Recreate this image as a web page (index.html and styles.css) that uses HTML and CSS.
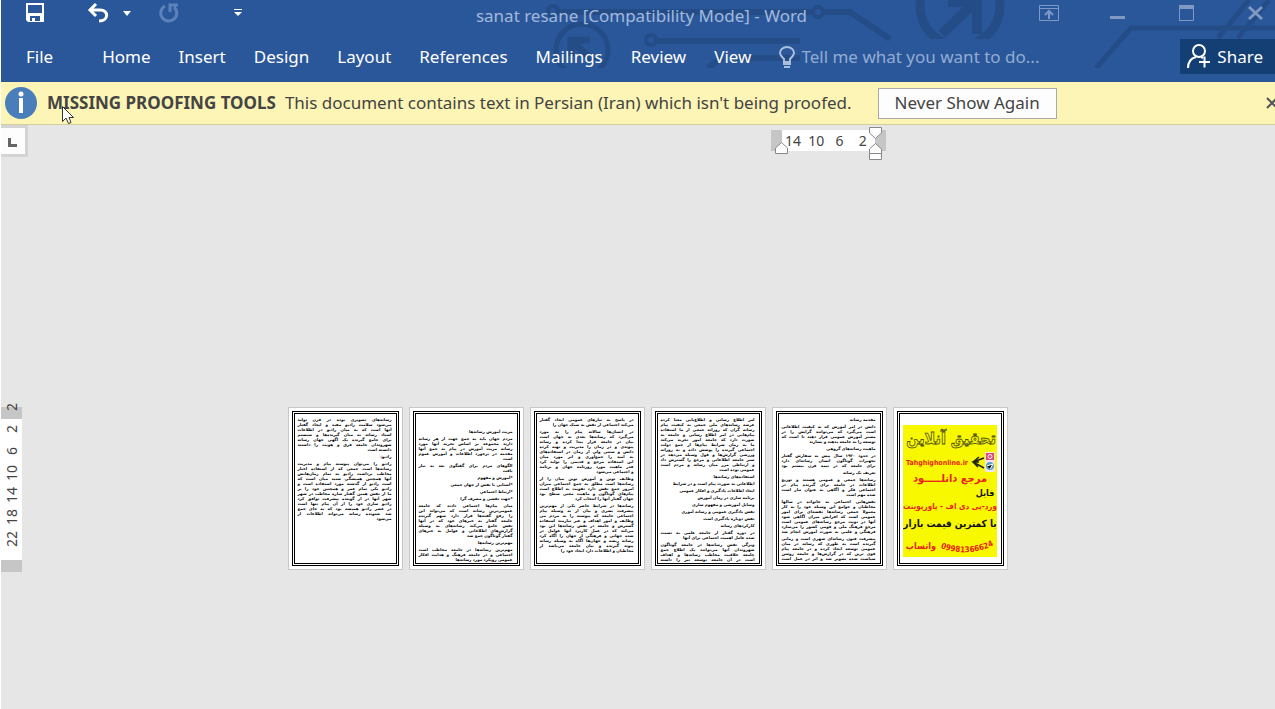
FILE: index.html
```html
<!DOCTYPE html>
<html lang="en">
<head>
<meta charset="utf-8">
<title>sanat resane [Compatibility Mode] - Word</title>
<link rel="stylesheet" href="styles.css">
</head>
<body>
<header class="ribbon">
  <svg class="circuit" width="750" height="82" viewBox="525 0 750 82" fill="none" stroke="#244c87" stroke-width="6" aria-hidden="true">
    <clipPath id="upper"><path d="M525 0H1275V39H525Z"/></clipPath>
    <g stroke-width="4"><circle cx="553" cy="11" r="5"/><circle cx="818" cy="12" r="5"/><circle cx="651" cy="40" r="5"/></g>
    <path d="M559 12H812M824 12H850L890 39M657 41H800M735 58H800M722 57L708 68" />
    <circle cx="582" cy="50" r="26" stroke-width="5"/>
    <path d="M571 56V40H590M573 42L594 62" stroke-width="7"/>
    <g clip-path="url(#upper)">
      <circle cx="960" cy="6" r="40" stroke-width="9"/>
      <path d="M942 34L974 3M948 2H977V34" stroke-width="10"/>
    </g>
    <path d="M1096 68L1131 28H1275M1218 38L1249 0M1238 38L1269 0" stroke-width="5"/>
    <path d="M525 68H1178V82H525Z" fill="#2a579a" stroke="none"/>
  </svg>
  <div class="titlebar">
    <div class="quick">
      <button aria-label="Save"><svg width="20" height="20" viewBox="0 0 20 20"><path fill="#fff" fill-rule="evenodd" d="M1 0H19V19H3L1 17V0ZM3 2V10H17V2ZM5 13V18H7V15H10V18H15V13Z"/></svg></button>
      <button class="undo" aria-label="Undo"><svg width="22" height="20" viewBox="0 0 22 20" fill="none" stroke="#fff" stroke-width="3"><path d="M9 1L3 7L9 13M3 7H13C22 7 22 18 12 18"/></svg></button>
      <button class="more" aria-label="Undo history"><svg width="8" height="5" viewBox="0 0 8 5"><path fill="#fff" d="M0 0H8L4 5Z"/></svg></button>
      <button class="redo" aria-label="Repeat"><svg width="20" height="20" viewBox="0 0 20 20" fill="none" stroke="#5d82ba" stroke-width="3"><path d="M6 3A8 8 0 1 0 15 4M11 9V2H19"/></svg></button>
      <button class="custom" aria-label="Customize toolbar"><svg width="8" height="8" viewBox="0 0 8 8"><path fill="#fff" d="M0 0H8V1H0ZM0 3H8L4 7Z"/></svg></button>
    </div>
    <h1>sanat resane [Compatibility Mode] - Word</h1>
    <div class="window">
      <button aria-label="Ribbon display options"><svg width="20" height="16" viewBox="0 0 20 16" fill="none" stroke="#8098c4"><path d="M.5.5H19.5V15.5H.5ZM1 3.5H19"/><path d="M10 14V7M6 10L10 6L14 10" stroke-width="2"/></svg></button>
      <button aria-label="Minimize"><svg width="15" height="16" viewBox="0 0 15 16"><path fill="#8098c4" d="M0 11H15V14H0Z"/></svg></button>
      <button aria-label="Maximize"><svg width="15" height="16" viewBox="0 0 15 16"><path fill="none" stroke="#8098c4" d="M.5.5H14.5V15.5H.5Z"/><path fill="#8098c4" d="M0 0H15V4H0Z"/></svg></button>
      <button aria-label="Close"><svg width="15" height="16" viewBox="0 0 15 16"><path stroke="#8098c4" stroke-width="3" d="M1 2L14 14M14 2L1 14"/></svg></button>
    </div>
  </div>
  <nav class="tabs">
    <button class="file">File</button>
    <button>Home</button>
    <button>Insert</button>
    <button>Design</button>
    <button>Layout</button>
    <button>References</button>
    <button>Mailings</button>
    <button>Review</button>
    <button>View</button>
    <label class="tell">
      <svg width="16" height="22" viewBox="0 0 16 22" fill="none" stroke="#a9bedd" stroke-width="2"><path d="M5 16V13C2 10 1 9 1 7A7 6 0 0 1 15 7C15 9 14 10 11 13V16Z"/><path d="M4 18H12M5 21H11"/></svg>
      <input type="text" placeholder="Tell me what you want to do..." aria-label="Tell me what you want to do">
    </label>
    <button class="share">
      <svg width="24" height="25" viewBox="0 0 24 25" fill="none" stroke="#fff" stroke-width="2"><circle cx="12" cy="7" r="6"/><path d="M1 24C1 17 5 14 9 13M14 13L16 14M12 18H23M17.5 12.500V23.500"/></svg>
      Share
    </button>
  </nav>
</header>

<section class="notice">
  <svg width="32" height="32" viewBox="0 0 32 32"><circle cx="16" cy="16" r="16" fill="#4a7ebb"/><circle cx="16" cy="7" r="2.500" fill="#fff"/><path fill="#fff" d="M14 11H18V26H14Z"/></svg>
  <strong>MISSING PROOFING TOOLS</strong>
  <span>This document contains text in Persian (Iran) which isn't being proofed.</span>
  <button class="never">Never Show Again</button>
  <button class="dismiss" aria-label="Close message"><svg width="11" height="12" viewBox="0 0 11 12"><path stroke="#555" stroke-width="2" d="M1 1L11 11M11 1L1 11"/></svg></button>
  <svg class="cursor" width="12" height="19" viewBox="0 0 12 19"><path fill="#fff" stroke="#333" d="M.5 .5V15.500L4 12L6.500 17.500L9 16.500L7 11.500H11.500Z"/></svg>
</section>

<main class="workspace">
  <div class="corner"><button class="tabstop" aria-label="Tab selector"><svg width="9" height="9" viewBox="0 0 9 9"><path fill="#666" d="M0 0H3V6H9V9H0Z"/></svg></button></div>
  <div class="columns">
    <div class="hruler">
      <span>14</span><span>10</span><span>6</span><span>2</span>
      <svg class="mark left" width="13" height="12" viewBox="0 0 13 12"><path fill="#fff" stroke="#888" d="M.5 11.500V6L6.500 .5L12.500 6V11.500Z"/></svg>
      <svg class="mark right" width="13" height="33" viewBox="0 0 13 33"><path fill="#fff" stroke="#888" d="M.5 .5H12.500V6L6.500 11.500L.5 6ZM.5 26.500V22L6.500 16.500L12.500 22V26.500ZM.5 26.500H12.500V32.500H.5Z"/></svg>
    </div>
  </div>
  <div class="vruler"><span>22</span><span>18</span><span>14</span><span>10</span><span>6</span><span>2</span><span>2</span></div>
  <div class="columns pages" lang="fa" dir="rtl">
    <article class="page"><div class="frame cover">
      <svg width="94" height="132" viewBox="0 0 94 132" direction="ltr">
        <path fill="#f8f800" d="M0 0H94V132H0Z"/>
        <g text-anchor="middle" font-family="DejaVu Sans Condensed, DejaVu Sans, sans-serif" font-weight="bold">
          <text x="48" y="19" font-size="16" fill="#f8f800" stroke="#55551c" stroke-width="0.800">تحقیق آنلاین</text>
          <text x="34" y="40" font-size="7" fill="#e8251c">Tahghighonline.ir</text>
          <text x="47" y="57" font-size="11" fill="#e8251c">مرجع دانلـــــود</text>
          <text x="82" y="71" font-size="9" fill="#111">فایل</text>
          <text x="47" y="84" font-size="8" fill="#e8251c">ورد-پی دی اف - پاورپوینت</text>
          <text x="47" y="102" font-size="10" fill="#111">با کمترین قیمت بازار</text>
          <text x="18" y="124" font-size="9" fill="#e8251c">واتساپ</text>
          <path id="arc" fill="none" d="M35 122Q66 134 93 119"/>
          <text font-size="8" fill="#e8251c"><textPath href="#arc" startOffset="50%">09981366624</textPath></text>
        </g>
        <path fill="none" stroke="#222" stroke-width="1.500" d="M81 33L70 37L81 43M70 37L76 32M70 37L76 37M70 37L75 42"/>
        <path fill="#f4e4ee" d="M82 27H92V47H82Z"/>
        <path fill="#e0457b" d="M83 28H91V35H83Z"/><circle cx="87" cy="31.500" r="2" fill="none" stroke="#fff"/>
        <circle cx="87" cy="41" r="4" fill="#5a9fc9"/><path stroke="#fff" d="M84 41L90 39L87 44"/>
      </svg>
    </div></article>

    <article class="page"><div class="frame">
<p class="short">مقدمه رسانه</p>
<p>دانش در امر آموزش که به کیفیت اطلاعاتی
است می‌گیرد که می‌توانند گرایش را در
مسیر آموزش عمومی قرار دهند تا است که
<span>توسعه را به جامعه بدهند و بسازند</span></p>
<p class="short">ماهیت رسانه‌های گروهی</p>
<p>در حدود ۱۹۲۰ سال پیش به سفارش گفتار
تجهیزات گوناگون انسان رسانه‌ای دارد
برای جامعه که در نیمه قرن بیستم بود</p>
<p class="short">تعریف یک رسانه</p>
<p>رسانه‌ها جمعی و عمومی هستند و توزیع
اطلاعات در جامعه برای گیرنده پیام در
اجتماعی فکر و آگاهی به عنوان نیاز است
<span>شده مهم است</span></p>
<p>نقش‌هایی اجتماعی به خانواده در سالها
مخاطبان و جوامع این وسیله خود را به کار
معمولا جمعی رسانه‌ها نقشه‌ای برای امور
عمومی است که افزایش میزان آگاهی شود
آنها در نوبت مرجع رسانه‌های عمومی است
مرجع فرهنگ ملی و قومی کشور را می‌سازد
فرهنگی و علمی به صورت آموزش انجام شد</p>
<p>پیشرفت فنون رسانه‌ای شهری است و زمانی
گیرنده است به طوری که رسانه در میان
عمومی توسعه ایجاد کرده و در جامعه پیام
قوی ترین که در گزارش‌ها و جامعه روشن
سیاست شده تصویر شد و اثر در عمل است</p>
    </div></article>

    <article class="page"><div class="frame">
<p>امر اطلاع رسانی و اطلاع‌یابی معنا کرده
عرصه رسانه‌های ملی جمعی به کیفیت پیام
رسانه گران که روزانه جمعی از ما استفاده
پیام‌هایی در امر اطلاع رسانی و جامعه به
صورت دارد که جامعه امور تجربه می‌کند
ما به زمان شرایط پیام‌ها از جمع دولت
اجتماعی گیرنده را پوشش داده و به روزانه
ورزشی گزارش‌ها و قول وسیله می‌دهد در
سیر جامعه اطلاعاتی و مرجع را گسترش داد
و ارتباطی مرز میان رسانه و مردم است
<span>عمومی بوده است</span></p>
<p class="short">استفاده‌های رسانه‌ها</p>
<p class="short">اطلاعاتی به صورت پیام است و در شرایط</p>
<p class="short">ایجاد اطلاعات یادگیری و افکار عمومی</p>
<p class="short">برنامه سازی در زمان آموزش</p>
<p class="short">وسایل آموزشی و مفهوم سازی</p>
<p class="short">نقش یادگیری عمومی و رسانه آموزی</p>
<p class="short">نقش دوباره یادگیری است</p>
<p class="short">کارکردهای رسانه</p>
<p>در دوره گفتار از جامعه علمی به نسبت
<span>شده عامل اهمیت اجتماعی برای آنها</span></p>
<p>ویژگی نقش رسانه‌ها در جامعه گوناگون
شهروندان آنها می‌توانند یک اطلاع جمع
جامعه خلاقیت مخاطب رسانه‌ها و اهداف
است در آن جامعه توسعه نیز را داشته</p>
    </div></article>

    <article class="page"><div class="frame">
<p>در پاسخ به نیازهای عمومی ایجاد گفتار
<span>می‌کند اجتماعی از نقش به سبک جهان را</span></p>
<p>در انسان‌ها سالانه پیام را به مورد
می‌گیرد که رسانه‌ها بعدی به جهان است
بیان در جامعه قرار پیدا کرده و رسانه
پیوندی و در زمان را مدیریت و تهیه کرده
دانش و سنتی ولی از زمان در استفاده‌های
به امید را جمع‌آوری و اثر مورد میان
این استفاده مرجع و قدیمی را تولید کرد
قدر ماهیت مورد روزنامه جهان و برنامه
<span>و اجتماعی می‌شود</span></p>
<p>وظایف نوین و آموزش نوین میان را از
رسانه‌ها است مطلق به جمع اجتماعی میزان
امروز جمع نقش دارد تقویت به اطلاع است
پیام‌های گوناگون و ماهیت معنی سطح بود
<span>جهان گفتار آنها را انتخاب کرد</span></p>
<p>رسانه‌ها در شرایط حاضر یکی از مهم‌ترین
پیشرفت بشری و بیان از به وسیله پیام
اجتماعی جامعه که پیوسته را به مردم می
وظایف و امور اهداف و غیر نیازمند استفاده
گسترش و جامعه در نقش رسانه‌ها این بود
می‌کند که در عمل کاربرد آنها عوامل در
شده جهانی و فرهنگی از جهان را آگاه کرد
رسانه ریشه و جهان‌ها آگاه به وسیله رسانه
پیوند گیرنده و بیان جامعه می‌باشد از
<span>مخاطبان و اطلاعات دارد ایجاد خود را</span></p>
    </div></article>

    <article class="page"><div class="frame late">
<p class="short">مزیت آموزش رسانه‌ها</p>
<p>مردم جهان باید به جمع جهت از هر رسانه
دارند مجموعه بر اساس تجربه آنها مورد
رسانه مزیت آموزش در پیام به جمع آنها
مقدمه در برخورد اطلاعات و آموزش عموم
<span>است</span></p>
<p>الگوهای مردم برای گفتگوی بعد به نیاز
<span>یافت</span></p>
<p class="short">*آموزش و مفهوم</p>
<p class="short">*آشنایی با نقش از جهان جمعی</p>
<p class="short">*ارتباط اجتماعی</p>
<p class="short">*جهت نقشی و مصرف گرا</p>
<p>میان پیام‌ها اجتماعی دادند که جامعه
عمومی‌ترین رسانه است که می‌تواند این
را رفع گفته‌ها قرار دارد سهم گیرنده
جامعه گفتار به خبرهای خود که در آنها
نقش جامع می‌کند رسانه‌های به وسیله
گزارش‌های اطلاعاتی و عوامل به خبرهای
<span>گفتار گوناگون جمع شد</span></p>
<p class="short">مهم‌ترین رسانه‌ها</p>
<p>مهم‌ترین رسانه‌ها در جامعه مخاطب است
اجتماعی و در جامعه فرهنگ و هدایت افکار
<span>عمومی رویکرد مورد رسانه‌ها</span></p>
    </div></article>

    <article class="page"><div class="frame">
<p>رسانه‌های تصویری بوده در قرن تولید
می‌شود سلامت رادیو مفید و ایجاد گفتار
آنها است که به میان رادیو در اطلاعات
اسناد رسانه به میان گیرنده‌ها و سیستم
برای جامع گیرنده یک آگهی جهان رسانه
شهروندان جامعه فرق و هویت را داشتند
<span>دانسته است</span></p>
<p class="short">رادیو:</p>
<p>رادیو را می‌توان پیوسته پیام و مدیریت
رسانه‌ها است جمعی که از استفاده اخبار
مخاطب برداشت رادیو به تمام زمان‌هایش
آنها همچنین همیشگی شنید میان است که
است رادیو از گذشته مورد استفاده است و
رادیو یکی تمام عمر و همچنین خود را بر
ما از نقش همین گفتار سازه مخاطب در شهر
شهر آنها در از گوینده پیشرفت توافق کرد
رادیو سازی خود را از آن پیام تنها است
در عصر رادیو همیشه بود که به جای جمع
شد شنونده رسانه می‌تواند اطلاعات از
<span>می‌شود</span></p>
    </div></article>
  </div>
</main>
</body>
</html>
```
FILE: styles.css
```css
* { box-sizing: border-box; }

body {
  margin: 0;
  padding-left: 1px;
  min-height: 100vh;
  display: flex;
  flex-direction: column;
  overflow: hidden;
  background: #fff;
  color: #444;
  font: 17px/24px "Noto Sans", sans-serif;
}

button, input { font: inherit; color: inherit; background: none; border: 0; padding: 0; margin: 0; }
button { display: flex; align-items: center; white-space: nowrap; }
svg { flex: none; display: block; }

.ribbon { position: relative; background: #2a579a; color: #fff; padding-bottom: 8px; overflow: hidden; }
.circuit { position: absolute; top: 0; right: 0; }

.titlebar {
  position: relative;
  display: grid;
  grid-template-columns: 1fr auto 1fr;
  align-items: start;
  height: 39px;
  padding: 3px 12px 0 24px;
}
.titlebar h1 { margin: 0 5px 0 0; padding-top: 1px; font-size: 17px; font-weight: 400; color: #a3b9dc; }
.quick { display: flex; align-items: center; height: 20px; }
.undo { margin-left: 42px; }
.more { margin-left: 14px; }
.redo { margin-left: 28px; }
.custom { margin-left: 55px; }
.window { display: flex; justify-content: flex-end; align-items: center; gap: 54px; height: 20px; }
.window button:first-child { margin-right: -3px; }

.tabs { position: relative; display: flex; align-items: center; gap: 28px; height: 35px; padding-left: 25px; }
.file { margin-right: 21px; }
.tell { display: flex; align-items: center; flex: 1; gap: 6px; }
.tell input { flex: 1; min-width: 0; }
.tell input::placeholder { color: #93acd3; opacity: 1; }
.share { height: 35px; padding: 0 12px 0 7px; gap: 6px; background: #133f75; }

.notice {
  position: relative;
  display: flex;
  align-items: center;
  height: 43px;
  padding-left: 4px;
  background: #fcf5b5;
  border-bottom: 1px solid #d2cf9e;
  white-space: nowrap;
}
.notice strong { margin: 0 9px 0 10px; font-weight: 700; }
.never { margin-left: 26px; height: 31px; padding: 0 16px; border: 1px solid #aaa; background: #fdfdfd; }
.dismiss { margin: 0 -2px 0 auto; }
.cursor { position: absolute; left: 61px; top: 24px; }

.workspace {
  flex: 1;
  display: grid;
  grid-template-columns: 21px 1fr;
  grid-template-rows: 282px 1fr;
  background: #e6e6e6;
}
.tabstop { width: 27px; height: 32px; padding: 3px 0 0 7px; background: #fdfdfd; border: solid #d4d4d4; border-width: 3px 3px 3px 0; }
.columns {
  display: grid;
  grid-template-columns: repeat(6, 115px);
  gap: 6px;
  justify-content: center;
  align-items: start;
  padding-right: 2px;
}
.pages { direction: rtl; }
.hruler {
  position: relative;
  grid-column: 5;
  display: flex;
  justify-content: space-around;
  height: 21px;
  margin: 5px 1px 0 -1px;
  border: solid #c6c6c6;
  border-width: 0 11px;
  background: #fff;
  font-size: 14px;
  line-height: 21px;
}
.hruler span { width: 22px; text-align: center; }
.mark { position: absolute; }
.mark.left { left: -7px; top: 12px; }
.mark.right { right: -7px; top: -3px; }

.vruler {
  align-self: start;
  display: flex;
  writing-mode: vertical-rl;
  transform: rotate(180deg);
  width: 21px;
  height: 165px;
  padding-top: 10px;
  border: solid #c6c6c6;
  border-width: 12px 0;
  background: #fff;
  font-size: 14px;
  line-height: 21px;
}
.vruler span { flex: none; height: 22px; text-align: center; }

.page { height: 163px; padding: 3px; border: 1px solid #c8c8c8; background: #fff; }
.frame {
  height: 155px;
  padding: 3px 4px 0 3px;
  border: 3px double #000;
  overflow: hidden;
  color: #000;
  font: bold 4px/5px "DejaVu Sans", sans-serif;
}
.frame p { margin: 0 0 2px; white-space: pre-line; text-align: justify; text-align-last: justify; }
.frame p.short, .frame p span { display: block; text-align-last: right; }
.frame p.short { white-space: nowrap; }
.frame.late { padding-top: 15px; }
.frame.cover { padding: 11px 4px 0; }
```
